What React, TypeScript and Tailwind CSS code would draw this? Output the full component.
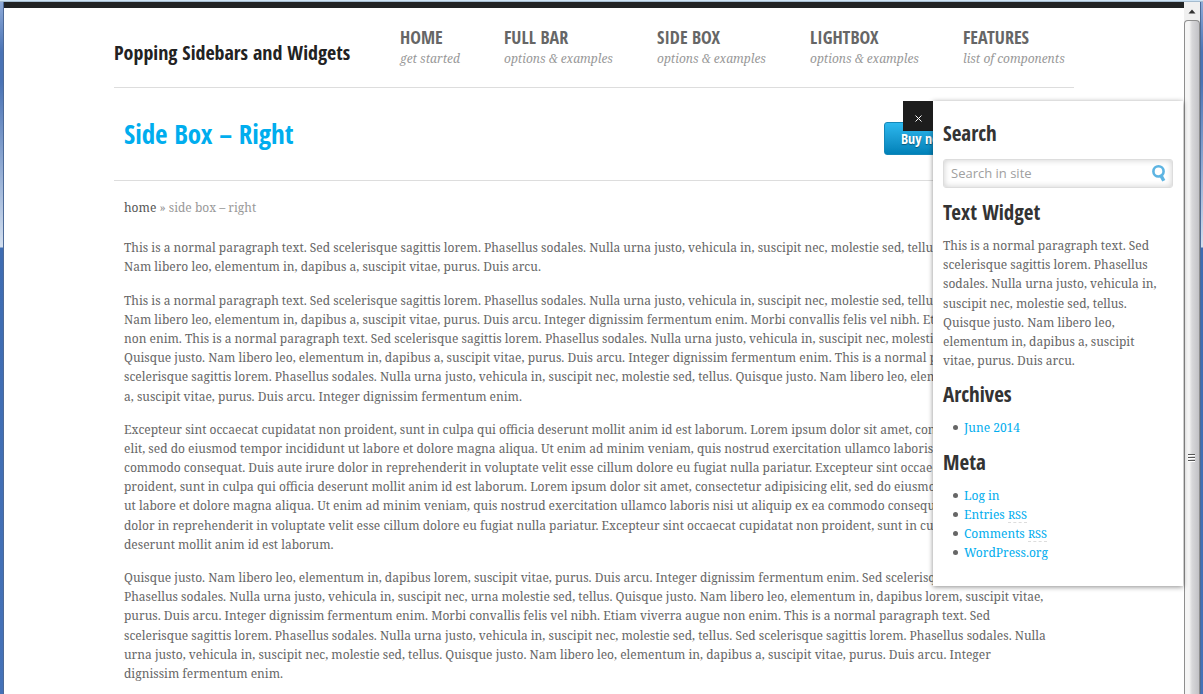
const nav = [
  { title: "HOME", note: "get started", width: "w-[104px]" },
  { title: "FULL BAR", note: "options & examples", width: "w-[153px]" },
  { title: "SIDE BOX", note: "options & examples", width: "w-[153px]" },
  { title: "LIGHTBOX", note: "options & examples", width: "w-[153px]" },
  { title: "FEATURES", note: "list of components", width: "w-[111px]" },
];

const paragraphs = [
  [
    "This is a normal paragraph text. Sed scelerisque sagittis lorem. Phasellus sodales. Nulla urna justo, vehicula in, suscipit nec, molestie sed, tellus.",
    "Nam libero leo, elementum in, dapibus a, suscipit vitae, purus. Duis arcu.",
  ],
  [
    "This is a normal paragraph text. Sed scelerisque sagittis lorem. Phasellus sodales. Nulla urna justo, vehicula in, suscipit nec, molestie sed, tellus.",
    "Nam libero leo, elementum in, dapibus a, suscipit vitae, purus. Duis arcu. Integer dignissim fermentum enim. Morbi convallis felis vel nibh. Etiam viverra augue",
    "non enim. This is a normal paragraph text. Sed scelerisque sagittis lorem. Phasellus sodales. Nulla urna justo, vehicula in, suscipit nec, molestie sed, tellus.",
    "Quisque justo. Nam libero leo, elementum in, dapibus a, suscipit vitae, purus. Duis arcu. Integer dignissim fermentum enim. This is a normal paragraph text. Sed",
    "scelerisque sagittis lorem. Phasellus sodales. Nulla urna justo, vehicula in, suscipit nec, molestie sed, tellus. Quisque justo. Nam libero leo, elementum in, dapibus",
    "a, suscipit vitae, purus. Duis arcu. Integer dignissim fermentum enim.",
  ],
  [
    "Excepteur sint occaecat cupidatat non proident, sunt in culpa qui officia deserunt mollit anim id est laborum. Lorem ipsum dolor sit amet, consectetur adipisicing",
    "elit, sed do eiusmod tempor incididunt ut labore et dolore magna aliqua. Ut enim ad minim veniam, quis nostrud exercitation ullamco laboris nisi ut aliquip ex ea",
    "commodo consequat. Duis aute irure dolor in reprehenderit in voluptate velit esse cillum dolore eu fugiat nulla pariatur. Excepteur sint occaecat cupidatat non",
    "proident, sunt in culpa qui officia deserunt mollit anim id est laborum. Lorem ipsum dolor sit amet, consectetur adipisicing elit, sed do eiusmod tempor incididunt",
    "ut labore et dolore magna aliqua. Ut enim ad minim veniam, quis nostrud exercitation ullamco laboris nisi ut aliquip ex ea commodo consequat. Duis aute irure",
    "dolor in reprehenderit in voluptate velit esse cillum dolore eu fugiat nulla pariatur. Excepteur sint occaecat cupidatat non proident, sunt in culpa qui officia",
    "deserunt mollit anim id est laborum.",
  ],
  [
    "Quisque justo. Nam libero leo, elementum in, dapibus lorem, suscipit vitae, purus. Duis arcu. Integer dignissim fermentum enim. Sed scelerisque sagittis lorem.",
    "Phasellus sodales. Nulla urna justo, vehicula in, suscipit nec, urna molestie sed, tellus. Quisque justo. Nam libero leo, elementum in, dapibus lorem, suscipit vitae,",
    "purus. Duis arcu. Integer dignissim fermentum enim. Morbi convallis felis vel nibh. Etiam viverra augue non enim. This is a normal paragraph text. Sed",
    "scelerisque sagittis lorem. Phasellus sodales. Nulla urna justo, vehicula in, suscipit nec, molestie sed, tellus. Sed scelerisque sagittis lorem. Phasellus sodales. Nulla",
    "urna justo, vehicula in, suscipit nec, molestie sed, tellus. Quisque justo. Nam libero leo, elementum in, dapibus a, suscipit vitae, purus. Duis arcu. Integer",
    "dignissim fermentum enim.",
  ],
];

const widgetText = [
  "This is a normal paragraph text. Sed",
  "scelerisque sagittis lorem. Phasellus",
  "sodales. Nulla urna justo, vehicula in,",
  "suscipit nec, molestie sed, tellus.",
  "Quisque justo. Nam libero leo,",
  "elementum in, dapibus a, suscipit",
  "vitae, purus. Duis arcu.",
];

function Lines({ lines }: { lines: string[] }) {
  return (
    <p className="mb-3.5 whitespace-nowrap">
      {lines.map((line, i) => (
        <span key={i} className="block">
          {line}
        </span>
      ))}
    </p>
  );
}

function WidgetTitle({ children }: { children: string }) {
  return (
    <h3 className="font-['Open_Sans_Condensed','Open_Sans',sans-serif] text-[21px] leading-7 font-bold text-[#333]">
      {children}
    </h3>
  );
}

function LinkList({ items }: { items: { label: string; href: string; rss?: boolean }[] }) {
  return (
    <ul className="mt-2.5 ml-2.5">
      {items.map((item) => (
        <li
          key={item.label}
          className="flex items-center before:mr-1.5 before:size-[5px] before:rounded-full before:bg-[#666]"
        >
          <a href={item.href} className="text-[#00adee]">
            {item.label}
            {item.rss && (
              <>
                {" "}
                <abbr
                  title="Really Simple Syndication"
                  className="border-b border-dashed border-[#ddd] text-[11px] no-underline"
                >
                  RSS
                </abbr>
              </>
            )}
          </a>
        </li>
      ))}
    </ul>
  );
}

function SideBox() {
  return (
    <aside className="absolute top-[99px] right-px w-[250px] bg-white px-2.5 pt-[18px] pb-6 shadow-[0_1px_5px_rgba(0,0,0,0.45)]">
      <button
        type="button"
        aria-label="Close"
        className="absolute top-0 right-full flex size-[30px] items-center justify-center bg-[#1d1d1d] pt-1"
      >
        <svg width="7" height="7" viewBox="0 0 7 7" stroke="#fff" strokeWidth="1" aria-hidden="true">
          <path d="M0.5 0.5 6.5 6.5M6.5 0.5 0.5 6.5" />
        </svg>
      </button>

      <WidgetTitle>Search</WidgetTitle>
      <form className="relative mt-3" onSubmit={(e) => e.preventDefault()}>
        <input
          type="search"
          aria-label="Search in site"
          placeholder="Search in site"
          className="block h-[29px] w-full rounded-[3px] border border-[#ddd] bg-white pr-8 pb-0.5 pl-[7px] font-['Open_Sans',sans-serif] text-[13px] text-[#666] shadow-[inset_0_0_6px_rgba(0,0,0,0.2)] outline-none placeholder:text-[#a0a0a0]"
        />
        <button type="submit" aria-label="Search" className="absolute top-1.5 right-[7px]">
          <svg width="14" height="17" viewBox="0 0 14 17" fill="none" stroke="#5db4e2" aria-hidden="true">
            <circle cx="6.5" cy="6.4" r="5.1" strokeWidth="2.6" />
            <path d="M9 10.6 11.8 15.8" strokeWidth="3.4" />
          </svg>
        </button>
      </form>

      <div className="mt-2.5">
        <WidgetTitle>Text Widget</WidgetTitle>
        <div className="mt-2.5">
          <Lines lines={widgetText} />
        </div>
      </div>

      <div className="-mt-1">
        <WidgetTitle>Archives</WidgetTitle>
        <LinkList items={[{ label: "June 2014", href: "#june" }]} />
      </div>

      <div className="mt-2.5">
        <WidgetTitle>Meta</WidgetTitle>
        <LinkList
          items={[
            { label: "Log in", href: "#login" },
            { label: "Entries", href: "#entries", rss: true },
            { label: "Comments", href: "#comments", rss: true },
            { label: "WordPress.org", href: "#wordpress" },
          ]}
        />
      </div>
    </aside>
  );
}

function Scrollbar() {
  return (
    <div className="flex w-4 shrink-0 flex-col bg-[#f0f0f0]">
      <button type="button" aria-label="Scroll up" className="flex h-[18px] items-center justify-center">
        <svg width="8" height="5" viewBox="0 0 8 5" aria-hidden="true">
          <path d="M4 0.5 7.5 4.5H0.5Z" fill="#333" />
        </svg>
      </button>
      <div className="flex flex-1 justify-center rounded-t-sm border border-b-0 border-[#8e8e8e] bg-linear-to-r from-[#f5f5f5] from-30% via-[#d8d8da] via-50% to-[#c2c2c6]">
        <svg className="mt-[433px]" width="8" height="8" viewBox="0 0 8 8" aria-hidden="true">
          <path d="M0 0.5H7M0 3.5H7M0 6.5H7" stroke="#555" />
          <path d="M0 1.5H7M0 4.5H7M0 7.5H7" stroke="#fff" />
        </svg>
      </div>
    </div>
  );
}

export default function App() {
  return (
    <div className="flex h-screen flex-col overflow-hidden bg-white font-['Noto_Serif','DejaVu_Serif',serif] text-xs leading-[1.6] text-[#666]">
      <div className="h-0.5 shrink-0 border-b border-[#a5bccf] bg-[#cfe4f5]" />
      <div className="flex min-h-0 flex-1">
        <div className="w-1 shrink-0 border-r border-[#4d6a97] bg-[linear-gradient(#8fabd8_0,#4a73b5_50px,#4a73b5_80px,#d3dfef_245px,#3e6cb2_246px,#4572b8_100%)]" />
        <div className="relative min-w-0 flex-1 border-t-[6px] border-[#212324]">
          <div className="mx-auto max-w-[960px]">
            <header className="flex h-20 justify-between border-b border-[#ddd]">
              <h1 className="pt-[31px] font-['Open_Sans_Condensed','Open_Sans',sans-serif] text-xl leading-7 font-bold whitespace-nowrap text-[#222]">
                Popping Sidebars and Widgets
              </h1>
              <nav className="flex pt-[17px]">
                {nav.map((item) => (
                  <a key={item.title} href="#top" className={`${item.width} whitespace-nowrap`}>
                    <span className="block font-['Open_Sans_Condensed','Open_Sans',sans-serif] text-lg leading-6 font-bold">
                      {item.title}
                    </span>
                    <span className="block leading-5 text-[#999] italic">{item.note}</span>
                  </a>
                ))}
              </nav>
            </header>

            <div className="flex h-[93px] items-start justify-between border-b border-[#ddd] px-2.5">
              <h2 className="pt-7 font-['Open_Sans_Condensed','Open_Sans',sans-serif] text-[27px] leading-9 font-bold text-[#00adee]">
                Side Box – Right
              </h2>
              <button
                type="button"
                className="mt-[34px] mr-[98px] h-[33px] rounded-[3px] border border-[#1487b8] bg-linear-to-b from-[#2cb8ee] to-[#0081b8] px-4 font-['Open_Sans_Condensed','Open_Sans',sans-serif] text-sm font-bold text-white [text-shadow:0_1px_1px_rgba(0,0,0,0.4)]"
              >
                Buy now
              </button>
            </div>

            <main className="px-2.5 pt-[17px]">
              <div className="mb-[21px] text-[#999]">
                <a href="#home" className="text-[#555]">
                  home
                </a>{" "}
                » side box – right
              </div>
              {paragraphs.map((lines, i) => (
                <Lines key={i} lines={lines} />
              ))}
            </main>
          </div>
          <div className="absolute inset-0 -top-1.5">
            <SideBox />
          </div>
        </div>
        <Scrollbar />
        <div className="w-[3px] shrink-0 border-l border-[#4d6a97] bg-[linear-gradient(#8fabd8_0,#4a73b5_50px,#4a73b5_80px,#d3dfef_245px,#3e6cb2_246px,#4572b8_100%)]" />
      </div>
    </div>
  );
}
